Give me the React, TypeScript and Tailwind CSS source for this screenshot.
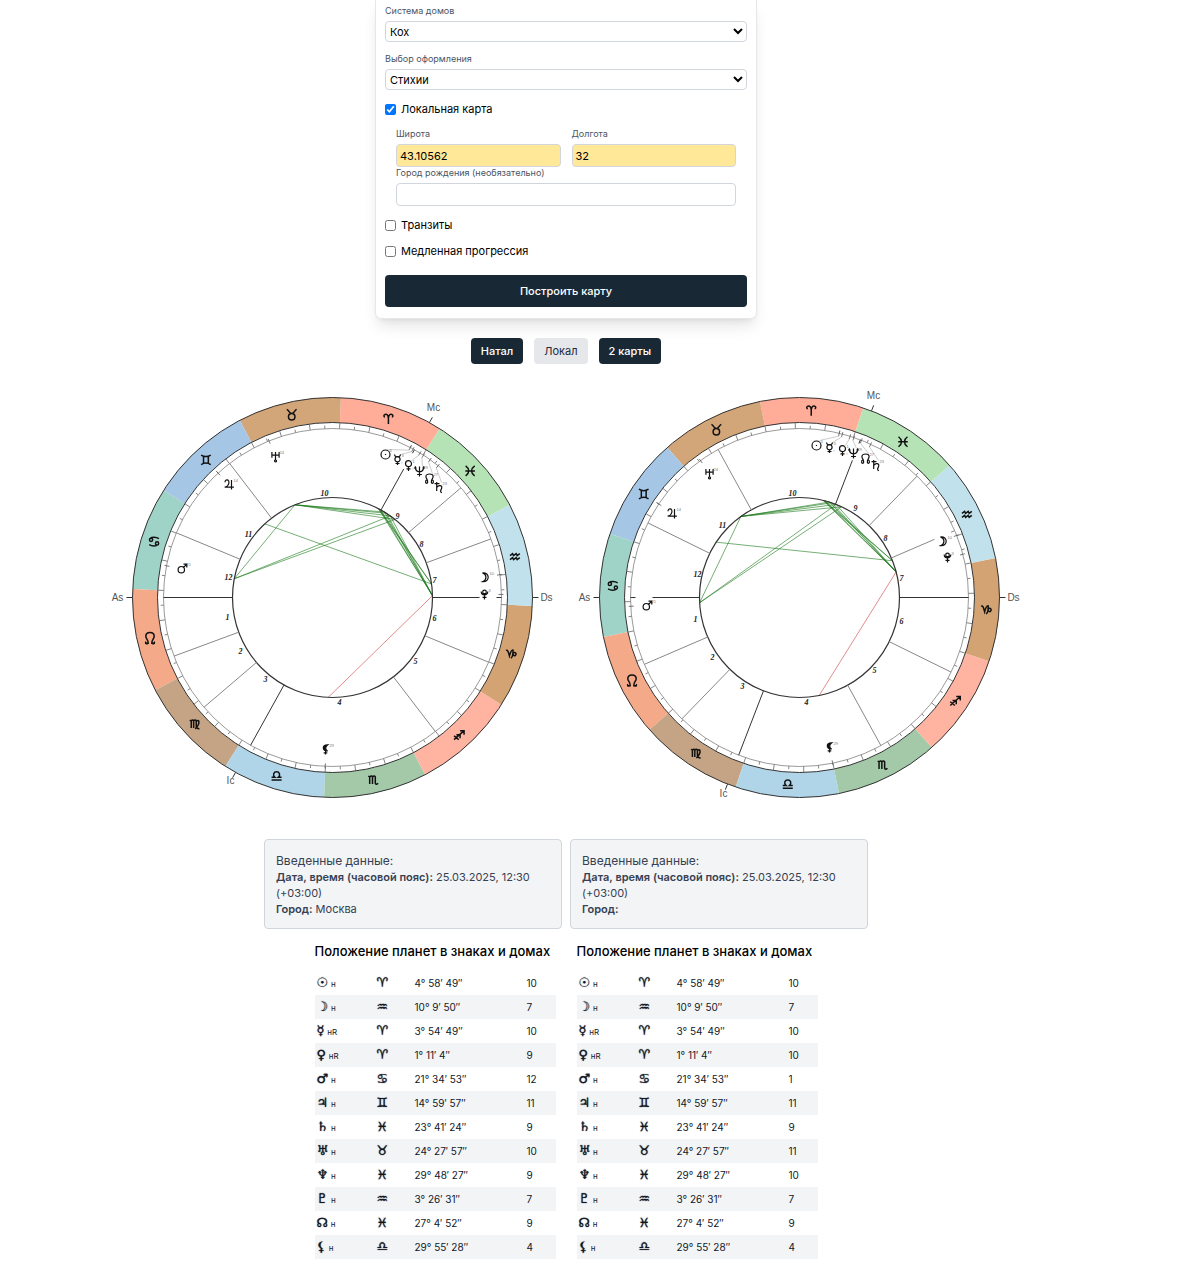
import React from 'react';

type Point = [number, number];

const polar = (angle: number, radius: number): Point => {
  const a = (angle * Math.PI) / 180;
  return [Math.cos(a) * radius, -Math.sin(a) * radius];
};

const signs = [
  { id: 'aries', glyph: '♈', color: '#ffad99' },
  { id: 'taurus', glyph: '♉', color: '#d2a679' },
  { id: 'gemini', glyph: '♊', color: '#a6c6e6' },
  { id: 'cancer', glyph: '♋', color: '#9fd3c7' },
  { id: 'leo', glyph: '♌', color: '#f4a988' },
  { id: 'virgo', glyph: '♍', color: '#c4a484' },
  { id: 'libra', glyph: '♎', color: '#b0d5e8' },
  { id: 'scorpio', glyph: '♏', color: '#a3c9a8' },
  { id: 'sagittarius', glyph: '♐', color: '#ffb3a1' },
  { id: 'capricorn', glyph: '♑', color: '#d4a373' },
  { id: 'aquarius', glyph: '♒', color: '#c1e1ec' },
  { id: 'pisces', glyph: '♓', color: '#b5e3b5' },
];

const signPaths: Record<string, string> = {
  aries: 'M0 5V-1C-.4 -5 -2.2 -5.2 -3.5 -4.6C-5 -4 -4.8 -2 -3.4 -2M0 -1C.4 -5 2.2 -5.2 3.5 -4.6C5 -4 4.8 -2 3.4 -2',
  taurus: 'M-5 -5.5C-3 -5.5 -3 -1.5 0 -1.5C3 -1.5 3 -5.5 5 -5.5M0 -1.5A3.2 3.2 0 1 0 0 5A3.2 3.2 0 1 0 0 -1.5',
  gemini: 'M-4.8 -4.8C-2 -3 2 -3 4.8 -4.8M-4.8 4.8C-2 3 2 3 4.8 4.8M-2.4 -3.6V3.6M2.4 -3.6V3.6',
  cancer: 'M4.8 -3C2 -4.8 -2 -4.8 -3.8 -3.2M-4.6 -1.8A1.6 1.6 0 1 1 -1.4 -1.8A1.6 1.6 0 1 1 -4.6 -1.8M-4.8 3C-2 4.8 2 4.8 3.8 3.2M4.6 1.8A1.6 1.6 0 1 1 1.4 1.8A1.6 1.6 0 1 1 4.6 1.8',
  leo: 'M-5 5H-1.8C-1.5 1.5 -4.2 .5 -4.2 -2C-4.2 -7 4.2 -7 4.2 -2C4.2 .5 1.5 1.5 1.8 5H5M-4.2 3.4A1.3 1.3 0 1 0 -2 4.8M4.2 3.4A1.3 1.3 0 1 1 2 4.8',
  virgo: 'M-5 -4L-3.6 -3V3.8M-3.6 -3C-2.5 -4.6 -1.4 -4 -1.2 -3V3.8M-1.2 -3C0 -4.6 1.2 -4 1.4 -3V2C1.6 4 3 4.8 4.6 4.6M1.4 -2.5C4 -5.5 6.2 -1.2 .4 4.8',
  libra: 'M-5 4H5M-5 1.4H-1.7C-4.3 -1 -2.8 -4.2 0 -4.2C2.8 -4.2 4.3 -1 1.7 1.4H5',
  scorpio: 'M-5 -4L-3.6 -3V4M-3.6 -3C-2.3 -4.7 -1 -4 -.8 -3V4M-.8 -3C.5 -4.7 1.8 -4 2 -3V3.2C2.2 4.4 3.4 4.6 4.8 3.2',
  sagittarius: 'M-5 4.5L5 -4.5M1 -4.5H5V-.5M-5 .8L-.4 4.5M-2.7 -.4H1V3.2',
  capricorn: 'M-5 -3C-3 -4 -2.5 -1 -1.5 2.5C-1 .5 0 -3.5 2 -3.5C2.2 -1 2.2 3 0 4.8M2 0C4 -2.8 6.5 1 4 2.3C3 2.8 2 1.5 2 0',
  aquarius: 'M-5 -1L-2.4 -3L-1.4 -1L1.2 -3L2.2 -1L4.8 -3M-5 3L-2.4 1L-1.4 3L1.2 1L2.2 3L4.8 1',
  pisces: 'M-4.5 -5C-.4 -2 -.4 2 -4.5 5M4.5 -5C.4 -2 .4 2 4.5 5M-4.8 0H4.8',
};

const planetPaths: Record<string, string> = {
  sun: 'M-4.5 0A4.5 4.5 0 1 1 4.5 0A4.5 4.5 0 1 1 -4.5 0M-.6 0H.6',
  moon: 'M-3 -4.6C4.6 -5.4 4.6 5 -3 4.2C1.6 2 1.6 -2.8 -3 -4.6Z',
  mercury: 'M-3 -5C-2.6 -1.8 2.6 -1.8 3 -5M-2.6 -.2A2.6 2.6 0 1 1 2.6 -.2A2.6 2.6 0 1 1 -2.6 -.2M0 2.5V5.5M-2 4H2',
  venus: 'M-3 -1.8A3 3 0 1 1 3 -1.8A3 3 0 1 1 -3 -1.8M0 1.2V5.5M-2 3.4H2',
  mars: 'M-4.4 1.2A3.2 3.2 0 1 1 2 1.2A3.2 3.2 0 1 1 -4.4 1.2M1 -1L4.3 -4.3M1 -4.3H4.3V-1',
  jupiter: 'M-4.5 -2.2C-4.5 -5.6 0 -5.4 -.6 -1.5C-1 .6 -2.8 2.2 -4.8 2.6H4.4M2 -4.5V5',
  saturn: 'M-4 -3.8H1M-1.8 -5.5V3.6M-1.8 0C0 -3 4 -2.2 3.2 .6C2.8 2.2 .8 4 3.4 5.2',
  uranus: 'M-3.6 -4.5V1.3M3.6 -4.5V1.3M-3.6 -1.4H3.6M0 -4.5V3.4M-1 4.4A1 1 0 1 1 1 4.4A1 1 0 1 1 -1 4.4',
  neptune: 'M-4.2 -4.4C-4.2 2 4.2 2 4.2 -4.4M0 -5V5M-2.4 3H2.4M-5 -3L-4.2 -4.6L-3.2 -3M3.2 -3L4.2 -4.6L5 -3',
  pluto: 'M-1.8 -2.6A1.8 1.8 0 1 1 1.8 -2.6A1.8 1.8 0 1 1 -1.8 -2.6M-3.3 -3C-3.3 1.4 3.3 1.4 3.3 -3M0 .5V5M-2 2.8H2',
  node: 'M-2 3C-1.6 1 -3.6 0 -3.6 -1.8C-3.6 -5.4 3.6 -5.4 3.6 -1.8C3.6 0 1.6 1 2 3M-3.7 3.2A1 1 0 1 0 -2 3.2A1 1 0 1 0 -3.7 3.2M3.7 3.2A1 1 0 1 1 2 3.2A1 1 0 1 1 3.7 3.2',
  lilith: 'M2 -4.6C-3.6 -4.4 -3.6 1 2 1.6C-.4 0 -.4 -3 2 -4.6ZM0 1.5V5M-1.8 3.3H1.8',
};

const planets = [
  { id: 'sun', glyph: '☉', lon: 4.98, sign: 0, pos: '4° 58′ 49″', deg: '4', mark: 'н' },
  { id: 'moon', glyph: '☽', lon: 310.16, sign: 10, pos: '10° 9′ 50″', deg: '10', mark: 'н' },
  { id: 'mercury', glyph: '☿', lon: 3.91, sign: 0, pos: '3° 54′ 49″', deg: '3', mark: 'нR' },
  { id: 'venus', glyph: '♀', lon: 1.18, sign: 0, pos: '1° 11′ 4″', deg: '1', mark: 'нR' },
  { id: 'mars', glyph: '♂', lon: 111.58, sign: 3, pos: '21° 34′ 53″', deg: '21', mark: 'н' },
  { id: 'jupiter', glyph: '♃', lon: 75, sign: 2, pos: '14° 59′ 57″', deg: '14', mark: 'н' },
  { id: 'saturn', glyph: '♄', lon: 353.69, sign: 11, pos: '23° 41′ 24″', deg: '23', mark: 'н' },
  { id: 'uranus', glyph: '♅', lon: 54.47, sign: 1, pos: '24° 27′ 57″', deg: '24', mark: 'н' },
  { id: 'neptune', glyph: '♆', lon: 359.8, sign: 11, pos: '29° 48′ 27″', deg: '29', mark: 'н' },
  { id: 'pluto', glyph: '♇', lon: 303.44, sign: 10, pos: '3° 26′ 31″', deg: '3', mark: 'н' },
  { id: 'node', glyph: '☊', lon: 357.08, sign: 11, pos: '27° 4′ 52″', deg: '27', mark: 'н' },
  { id: 'lilith', glyph: '⚸', lon: 209.92, sign: 6, pos: '29° 55′ 28″', deg: '29', mark: 'н' },
];

const aspects: [string, string, string][] = [
  ['uranus', 'venus', '#1b7a1b'],
  ['uranus', 'neptune', '#1b7a1b'],
  ['uranus', 'node', '#1b7a1b'],
  ['uranus', 'saturn', '#1b7a1b'],
  ['uranus', 'mars', '#1b7a1b'],
  ['mars', 'node', '#1b7a1b'],
  ['mars', 'saturn', '#1b7a1b'],
  ['jupiter', 'moon', '#1b7a1b'],
  ['moon', 'sun', '#1b7a1b'],
  ['moon', 'mercury', '#1b7a1b'],
  ['pluto', 'sun', '#1b7a1b'],
  ['pluto', 'mercury', '#1b7a1b'],
  ['pluto', 'venus', '#1b7a1b'],
  ['pluto', 'neptune', '#1b7a1b'],
  ['pluto', 'node', '#1b7a1b'],
  ['pluto', 'lilith', '#d04040'],
  ['sun', 'neptune', '#603020'],
  ['venus', 'saturn', '#603020'],
];

interface ChartData {
  title: string;
  asc: number;
  cusps: { angle: number; from?: number; to?: number }[];
  numbers: Point[];
  places: Record<string, Point>;
  axes: { text: string; at: Point; angle: number }[];
  houses: number[];
}

const natal: ChartData = {
  title: 'Натальная карта',
  asc: 122.4,
  cusps: [
    { angle: 180 }, { angle: 200.3 }, { angle: 220.5 }, { angle: 241 }, { angle: 307.5 }, { angle: 337.5 },
    { angle: 0, to: 147 }, { angle: 0, from: 164 }, { angle: 20.3 }, { angle: 40.5 }, { angle: 61, to: 147 },
    { angle: 61, from: 165 }, { angle: 127.5 }, { angle: 157.5 },
  ],
  numbers: [[-105, 19], [-92, 53], [-67, 81], [7, 104], [83, 63], [102, 20], [102, -18], [89, -54], [65, -82], [-8, -105], [-84, -64], [-104, -21]],
  places: {
    sun: [53, -143], mercury: [65, -138], venus: [76, -132], neptune: [87, -126], node: [97, -119], saturn: [106, -110],
    moon: [153, -20], pluto: [152, -3], mars: [-150, -29], jupiter: [-103, -113], uranus: [-57, -141], lilith: [-7, 152],
  },
  axes: [
    { text: 'As', at: [-215, 0], angle: 180 }, { text: 'Ds', at: [214, 0], angle: 0 },
    { text: 'Mc', at: [101, -190], angle: 61 }, { text: 'Ic', at: [-102, 183], angle: 241 },
  ],
  houses: [10, 7, 10, 9, 12, 11, 9, 10, 9, 7, 9, 4],
};

const local: ChartData = {
  title: 'Локальная карта',
  asc: 108.6,
  cusps: [
    { angle: 180, to: 147 }, { angle: 180, from: 164 }, { angle: 203.3 }, { angle: 225.9 }, { angle: 248.9 }, { angle: 298.8 }, { angle: 333.8 },
    { angle: 0 }, { angle: 23.3, to: 147 }, { angle: 23.3, from: 165 }, { angle: 45.9 }, { angle: 68.9, to: 147 },
    { angle: 68.9, from: 165 }, { angle: 118.8 }, { angle: 153.8 },
  ],
  numbers: [[-104, 21], [-87, 59], [-57, 88], [7, 104], [75, 72], [102, 23], [102, -20], [86, -60], [56, -90], [-7, -105], [-77, -73], [-102, -24]],
  places: {
    sun: [17, -152], mercury: [30, -150], venus: [43, -147], neptune: [54, -144], node: [66, -139], saturn: [76, -132],
    moon: [144, -56], pluto: [148, -40], mars: [-152, 8], jupiter: [-127, -84], uranus: [-90, -124], lilith: [30, 150],
  },
  axes: [
    { text: 'As', at: [-215, 0], angle: 180 }, { text: 'Ds', at: [214, 0], angle: 0 },
    { text: 'Mc', at: [74, -202], angle: 68.9 }, { text: 'Ic', at: [-76, 196], angle: 248.9 },
  ],
  houses: [10, 7, 10, 10, 1, 11, 9, 11, 10, 7, 9, 4],
};

const clustered = ['sun', 'mercury', 'venus', 'neptune', 'node', 'saturn'];

function Segment({ angle, from, to, stroke, width = 1 }: { angle: number; from: number; to: number; stroke: string; width?: number }) {
  const [x1, y1] = polar(angle, from);
  const [x2, y2] = polar(angle, to);
  return <line x1={x1} y1={y1} x2={x2} y2={y2} stroke={stroke} strokeWidth={width} />;
}

function Wheel({ chart }: { chart: ChartData }) {
  const toAngle = (lon: number) => 180 + lon - chart.asc;
  const lonOf = (id: string) => planets.find((p) => p.id === id)!.lon;
  const mainAxes = new Set([0, 180, chart.axes[2].angle, chart.axes[3].angle]);
  return (
    <svg viewBox="-233.5 -220.5 467 441" role="img" aria-label={chart.title} className="w-full min-w-0 max-w-[467px] font-['Liberation_Sans',sans-serif]">
      {signs.map((s, i) => {
        const a = toAngle(i * 30);
        const [x1, y1] = polar(a, 200);
        const [x2, y2] = polar(a + 30, 200);
        const [x3, y3] = polar(a + 30, 175);
        const [x4, y4] = polar(a, 175);
        const [gx, gy] = polar(a + 15, 187);
        return (
          <g key={s.id}>
            <path d={`M${x1} ${y1}A200 200 0 0 0 ${x2} ${y2}L${x3} ${y3}A175 175 0 0 1 ${x4} ${y4}Z`} fill={s.color} />
            <path d={signPaths[s.id]} transform={`translate(${gx} ${gy})`} fill="none" stroke="#111" strokeWidth={1.5} />
          </g>
        );
      })}
      {aspects.map(([a, b, color]) => {
        const [x1, y1] = polar(toAngle(lonOf(a)), 100);
        const [x2, y2] = polar(toAngle(lonOf(b)), 100);
        return <line key={a + b} x1={x1} y1={y1} x2={x2} y2={y2} stroke={color} strokeOpacity={0.6} />;
      })}
      <circle r={200} fill="none" stroke="#333" />
      <circle r={175} fill="none" stroke="#333" />
      <circle r={169} fill="none" stroke="#555" strokeWidth={0.6} />
      <circle r={100} fill="none" stroke="#333" strokeWidth={1.2} />
      {Array.from({ length: 72 }, (_, i) => (
        <Segment key={i} angle={toAngle(i * 5)} from={169} to={i % 2 ? 172 : 175} stroke="#666" width={0.8} />
      ))}
      {chart.cusps.map((c, i) => {
        const strong = mainAxes.has(c.angle);
        return <Segment key={i} angle={c.angle} from={c.from ?? 100} to={c.to ?? 169} stroke={strong ? '#333' : '#888'} />;
      })}
      {chart.axes.map((a) => (
        <g key={a.text}>
          <Segment angle={a.angle} from={200} to={206} stroke="#333" />
          <text x={a.at[0]} y={a.at[1] + 3} fontSize={10} textAnchor="middle" fill="#555">{a.text}</text>
        </g>
      ))}
      {chart.numbers.map(([x, y], i) => (
        <text key={i} x={x} y={y + 3} fontSize={8} fontWeight={700} fontStyle="italic" textAnchor="middle" fill="#222" className="font-['Liberation_Serif',serif]">
          {i + 1}
        </text>
      ))}
      {planets.map((p) => {
        const [x, y] = chart.places[p.id];
        const [tx, ty] = polar(toAngle(p.lon), 166);
        return (
          <g key={p.id}>
            <Segment angle={toAngle(p.lon)} from={166} to={171} stroke="#555" width={0.8} />
            {clustered.includes(p.id) && <line x1={tx} y1={ty} x2={x + 3} y2={y - 5} stroke="#999" strokeWidth={0.5} />}
            <path d={planetPaths[p.id]} transform={`translate(${x} ${y})`} fill={p.id === 'lilith' ? '#111' : 'none'} stroke="#111" strokeWidth={1.2} />
            <text x={x + 4} y={y - 3} fontSize={4} fill="#777">{p.deg}</text>
            {p.mark === 'нR' && <text x={x + 4} y={y + 4} fontSize={3} fill="#777">r</text>}
          </g>
        );
      })}
    </svg>
  );
}

function InfoCard({ city }: { city: string }) {
  return (
    <section className="w-[298px] rounded border border-gray-300 bg-gray-100 px-[11px] pt-3 pb-[11px] text-[11px] leading-4 text-gray-700">
      <h3 className="text-[12px] leading-[17px]">Введенные данные:</h3>
      <p><strong className="font-semibold">Дата, время (часовой пояс):</strong> 25.03.2025, 12:30 (+03:00)</p>
      <p><strong className="font-semibold">Город:</strong> {city}</p>
    </section>
  );
}

function PositionTable({ chart }: { chart: ChartData }) {
  return (
    <section className="w-[241px]">
      <h2 className="text-[13px] font-medium leading-5 whitespace-nowrap">Положение планет в знаках и домах</h2>
      <table className="mt-[10px] w-full table-fixed border-collapse text-[10px] text-gray-900">
        <colgroup>
          <col className="w-[62px]" />
          <col className="w-[38px]" />
          <col className="w-[112px]" />
          <col />
        </colgroup>
        <tbody>
          {planets.map((p, i) => (
            <tr key={p.id} className="h-6 even:bg-gray-100">
              <td className="p-0 pl-0.5 leading-5">
                <span className="font-['DejaVu_Sans',sans-serif] text-[13px] font-bold [text-shadow:0_0_1px_#111]">{p.glyph}</span>{' '}
                <span className="text-[8px]">{p.mark}</span>
              </td>
              <td className="p-0 font-['DejaVu_Sans',sans-serif] text-[13px] font-bold leading-5 [text-shadow:0_0_1px_#111]">{signs[p.sign].glyph}</td>
              <td className="p-0 leading-5">{p.pos}</td>
              <td className="p-0 leading-5">{chart.houses[i]}</td>
            </tr>
          ))}
        </tbody>
      </table>
    </section>
  );
}

function SelectField({ id, label, options }: { id: string; label: string; options: string[] }) {
  return (
    <div>
      <label htmlFor={id} className="block text-[9px] leading-3 text-gray-600">{label}</label>
      <select id={id} className="mt-1 block h-[21px] w-full rounded border border-gray-300 bg-white text-[11px] text-black">
        {options.map((o) => <option key={o}>{o}</option>)}
      </select>
    </div>
  );
}

function TextField({ id, label, value = '', filled = false }: { id: string; label: string; value?: string; filled?: boolean }) {
  return (
    <div>
      <label htmlFor={id} className="block text-[9px] leading-3 text-gray-600">{label}</label>
      <input
        id={id}
        defaultValue={value}
        className={`mt-1 block h-[23px] w-full rounded border border-gray-300 px-[3px] text-[11px] text-black ${filled ? 'bg-[#ffe999]' : 'bg-white'}`}
      />
    </div>
  );
}

function Check({ label, checked = false }: { label: string; checked?: boolean }) {
  return (
    <label className="flex items-center gap-[5px] text-[11px] leading-4 text-black">
      <input type="checkbox" defaultChecked={checked} className="size-[11px]" />
      {label}
    </label>
  );
}

export default function App() {
  return (
    <main className="flex flex-col items-center bg-white pr-[71px] pb-[11px] font-[Inter,sans-serif] text-black">
      <form className="w-full max-w-[382px] rounded-b-md border border-t-0 border-gray-200 px-[9px] pt-[5px] pb-[11px] shadow-lg" onSubmit={(e) => e.preventDefault()}>
        <SelectField id="houses" label="Система домов" options={['Кох', 'Плацидус']} />
        <div className="mt-[11px]">
          <SelectField id="style" label="Выбор оформления" options={['Стихии', 'Классика']} />
        </div>
        <div className="mt-[11px]"><Check label="Локальная карта" checked /></div>
        <div className="mt-[11px] px-[11px]">
          <div className="grid grid-cols-2 gap-[11px]">
            <TextField id="lat" label="Широта" value="43.10562" filled />
            <TextField id="lon" label="Долгота" value="32" filled />
          </div>
          <TextField id="city" label="Город рождения (необязательно)" />
        </div>
        <div className="mt-[11px]"><Check label="Транзиты" /></div>
        <div className="mt-[10px]"><Check label="Медленная прогрессия" /></div>
        <button type="submit" className="mt-4 h-8 w-full rounded bg-[#182935] text-[11px] font-medium text-white">Построить карту</button>
      </form>

      <nav className="mt-[19px] flex gap-[11px] text-[11px] font-medium">
        <button type="button" className="h-[26px] rounded-sm bg-[#182935] px-2.5 text-white">Натал</button>
        <button type="button" className="h-[26px] rounded-sm bg-gray-200 px-2.5 font-normal text-gray-800">Локал</button>
        <button type="button" className="h-[26px] rounded-sm bg-[#182935] px-2.5 text-white">2 карты</button>
      </nav>

      <div className="mt-[13px] flex w-full justify-center">
        <Wheel chart={natal} />
        <Wheel chart={local} />
      </div>

      <div className="mt-[21px] flex items-stretch justify-center gap-2">
        <InfoCard city="Москва" />
        <InfoCard city="" />
      </div>

      <div className="mt-3 flex justify-center gap-[21px]">
        <PositionTable chart={natal} />
        <PositionTable chart={local} />
      </div>
    </main>
  );
}
